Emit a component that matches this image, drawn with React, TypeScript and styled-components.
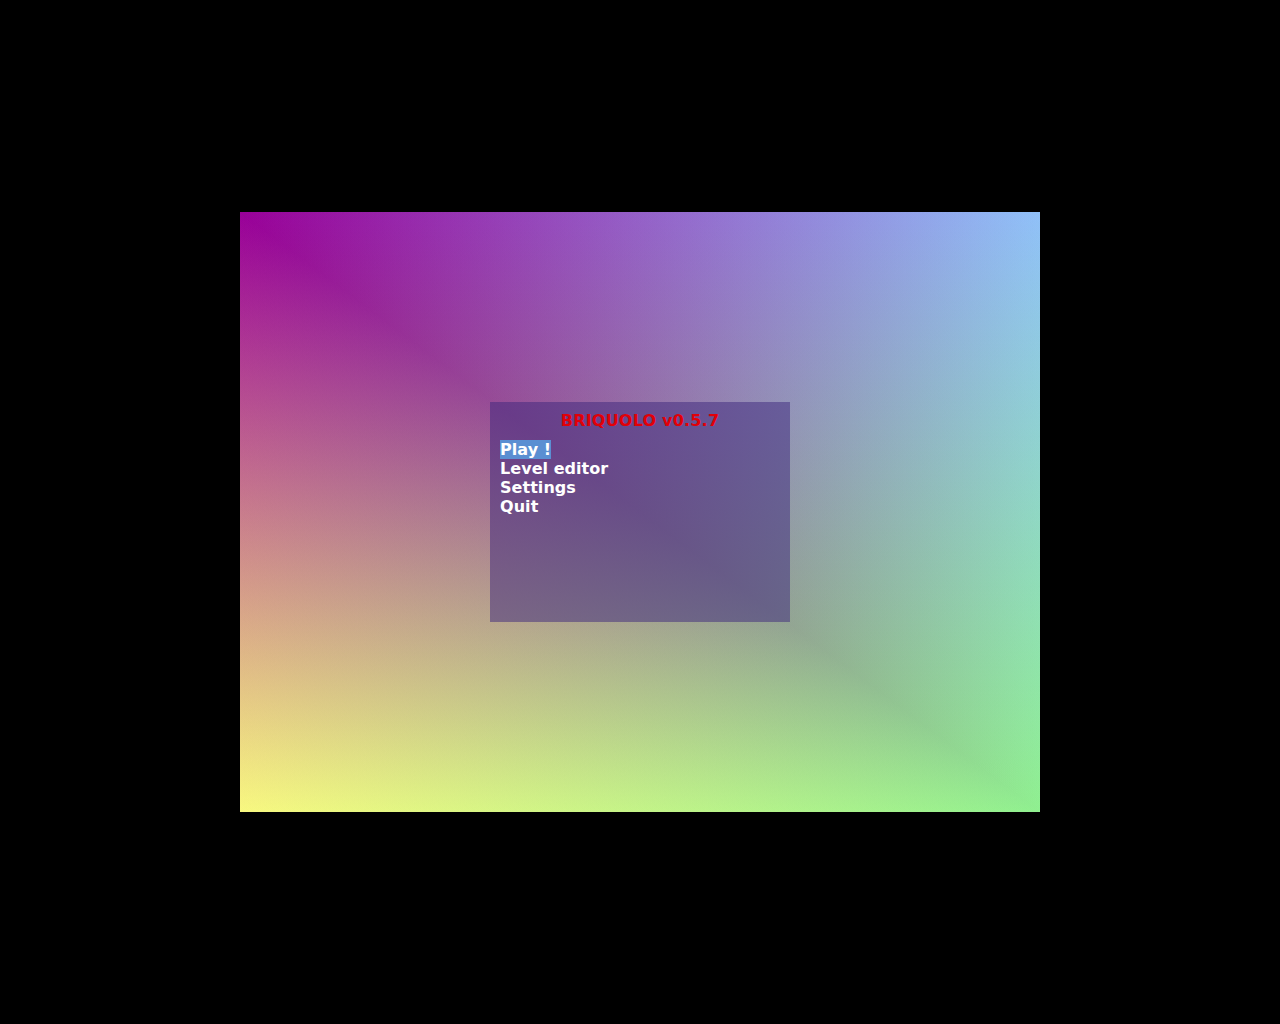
import React from 'react';
import styled, { createGlobalStyle } from 'styled-components';

const TL = '#990099';
const TR = '#90c0f8';
const BL = '#f8f880';
const BR = '#90f090';

const GlobalStyle = createGlobalStyle`
  html, body {
    margin: 0;
    padding: 0;
    background: #000;
  }
  body {
    font-family: "DejaVu Sans", "Liberation Sans", sans-serif;
  }
`;

const Screen = styled.div`
  width: 100vw;
  height: 100vh;
  display: flex;
  align-items: center;
  justify-content: center;
  background: #000;
  overflow: hidden;
`;

const Board = styled.div`
  position: relative;
  width: 800px;
  height: 600px;
  display: flex;
  align-items: center;
  justify-content: center;
  isolation: isolate;
  overflow: hidden;
  background: #000;
`;

/* Gouraud-shaded background: two triangles split along the TL-BR diagonal,
   each the additive sum of three barycentric-weighted colour layers. */
const Half = styled.div<{ $upper?: boolean }>`
  position: absolute;
  inset: 0;
  background: #000;
  isolation: isolate;
  ${(p) => (p.$upper ? 'clip-path: polygon(0 0, 100% 0, 100% 100%);' : '')}
`;

const Shade = styled.div<{ $gradient: string }>`
  position: absolute;
  inset: 0;
  background: ${(p) => p.$gradient};
  mix-blend-mode: plus-lighter;
`;

const Menu = styled.div`
  position: relative;
  z-index: 1;
  width: 300px;
  height: 220px;
  box-sizing: border-box;
  padding: 9px 10px;
  background: rgba(60, 38, 124, 0.5);
  font-family: "DejaVu Sans", "Liberation Sans", sans-serif;
  font-weight: bold;
  font-size: 16px;
  line-height: 19px;
  color: #ffffff;
`;

const Title = styled.div`
  color: #e20008;
  text-align: center;
  margin-bottom: 10px;
  white-space: nowrap;
  letter-spacing: 0.2px;
`;

const ItemList = styled.div`
  display: flex;
  flex-direction: column;
`;

const Item = styled.div`
  white-space: pre;
  letter-spacing: 0.05px;
`;

const Label = styled.span<{ $active?: boolean }>`
  background: ${(p) => (p.$active ? '#5a8fd2' : 'transparent')};
`;

const lower = [
  `linear-gradient(to bottom, ${TL}, #000)`,
  `linear-gradient(to bottom left, #000 50%, ${BL} 100%)`,
  `linear-gradient(to right, #000, ${BR})`,
];

const upper = [
  `linear-gradient(to right, ${TL}, #000)`,
  `linear-gradient(to top right, #000 50%, ${TR} 100%)`,
  `linear-gradient(to bottom, #000, ${BR})`,
];

const items = ['Play !', 'Level editor', 'Settings', 'Quit'];

export default function App() {
  return (
    <>
      <GlobalStyle />
      <Screen>
        <Board>
          <Half>
            {lower.map((g, i) => (
              <Shade key={i} $gradient={g} />
            ))}
          </Half>
          <Half $upper>
            {upper.map((g, i) => (
              <Shade key={i} $gradient={g} />
            ))}
          </Half>
          <Menu>
            <Title>BRIQUOLO v0.5.7</Title>
            <ItemList>
              {items.map((label, i) => (
                <Item key={label}>
                  <Label $active={i === 0}>{label}</Label>
                </Item>
              ))}
            </ItemList>
          </Menu>
        </Board>
      </Screen>
    </>
  );
}
